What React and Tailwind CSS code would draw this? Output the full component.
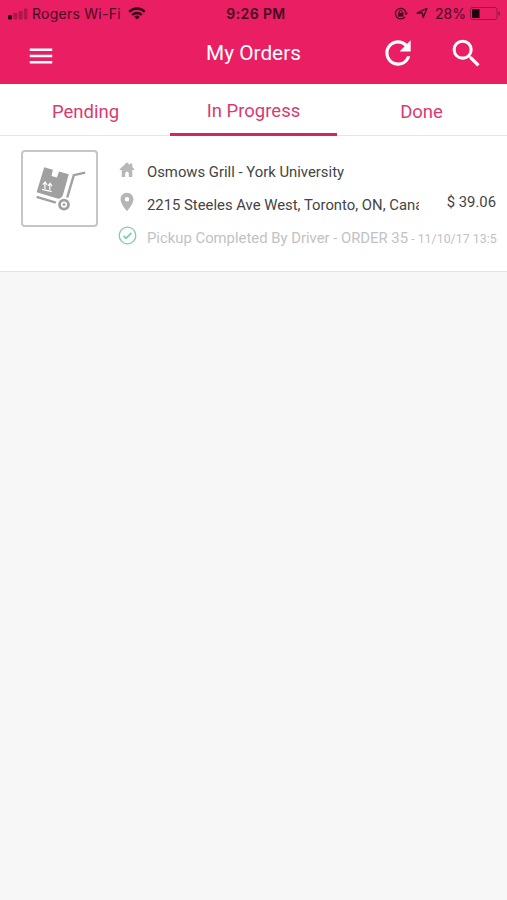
import { MdMenu, MdRefresh, MdSearch, MdPlace } from 'react-icons/md';

const tabs = ['Pending', 'In Progress', 'Done'];

const order = {
  store: 'Osmows Grill - York University',
  address: '2215 Steeles Ave West, Toronto, ON, Cana',
  status: 'Pickup Completed By Driver - ORDER 35',
  date: ' - 11/10/17 13:5',
  price: '$ 39.06',
};

function StatusBar() {
  return (
    <div className="grid h-[27px] grid-cols-3 items-center pl-2 pr-[6px] text-[#450a22] font-[Inter,sans-serif] text-[14px]">
      <div className="flex items-center whitespace-nowrap">
        <svg className="w-5 h-3 shrink-0" viewBox="0 0 20 12" fill="currentColor">
          <rect x="0" y="7" width="4" height="4.5" rx="1" fill="#260412" />
          <rect x="5.3" y="5" width="4" height="6.5" rx="1" opacity=".35" />
          <rect x="10.6" y="3" width="4" height="8.5" rx="1" opacity=".35" />
          <rect x="15.9" y="0.5" width="3.5" height="11" rx="1" opacity=".35" />
        </svg>
        <span className="ml-[4px] tracking-[0.25px]">Rogers Wi-Fi</span>
        <svg className="ml-[7px] -mt-[1px] w-[18px] h-[13px] shrink-0" viewBox="0 0 18 13" fill="none" stroke="#35061a" strokeWidth="2.4">
          <path d="M1.2 4.8a11 11 0 0 1 15.6 0" />
          <path d="M4.2 8a6.8 6.8 0 0 1 9.6 0" />
          <path d="M9 12.6 6.3 9.9a3.8 3.8 0 0 1 5.4 0z" fill="#35061a" stroke="none" />
        </svg>
      </div>
      <div className="pl-[3px] text-center font-semibold tracking-[0.4px]">9:26 PM</div>
      <div className="flex items-center justify-end">
        <svg className="-mt-[1px] w-[14px] h-[13px]" viewBox="0 0 14 13" fill="none" stroke="currentColor" strokeWidth="1.3">
          <path d="M11 9.8A5.3 5.3 0 1 1 11.8 5" />
          <path d="M10 5.4h4l-2 2.8z" fill="currentColor" stroke="none" />
          <rect x="4" y="5.8" width="5.4" height="3.8" fill="currentColor" stroke="none" />
          <path d="M5.2 6V4.8a1.5 1.5 0 0 1 3 0V6" strokeWidth="1" />
        </svg>
        <svg className="ml-[8px] -mt-[1px] w-[12px] h-[12px]" viewBox="0 0 12 12" fill="none" stroke="currentColor" strokeWidth="1.3" strokeLinejoin="round">
          <path d="M1 6 11 1.4 7.2 10.6 6.4 5.8z" />
        </svg>
        <span className="ml-[7px]">28%</span>
        <svg className="ml-[4px] -mt-[1px] w-[31px] h-[13px]" viewBox="0 0 31 13" fill="none">
          <rect x="0.5" y="0.5" width="26.5" height="12" rx="2" stroke="#9c1446" />
          <rect x="2" y="2" width="7.5" height="9" rx="0.5" fill="#1c030d" />
          <path d="M28.5 4.2c2 .8 2 3.8 0 4.6z" fill="#8f123f" />
        </svg>
      </div>
    </div>
  );
}

function CartIcon() {
  return (
    <svg className="w-[52px] h-[48px]" viewBox="0 0 52 48" fill="#a0a0a0">
      <path d="M10.2 2.2 18.9 4.7 17.5 10.9 22.9 12.4 25 6.5 34.8 9.3 29 29.8C27.8 32.6 26.2 34.2 23.4 33.6L2.6 27.3z" />
      <g stroke="#fff" strokeWidth="1.2" fill="none">
        <path d="M10.9 24V17.4M8.8 19.6 11.2 17 13 20" />
        <path d="M15.8 25.2V18.6M13.9 20.8 16.2 18.2 18 21.2" />
        <path d="M8 24.4 17.8 26.6" />
      </g>
      <path d="M2.6 31.8 21.8 37.6" fill="none" stroke="#a0a0a0" strokeWidth="2.4" />
      <path d="M33.2 32.5 39.8 10.2 51.2 7.6" fill="none" stroke="#a0a0a0" strokeWidth="2.4" />
      <circle cx="30" cy="39.6" r="4.5" fill="none" stroke="#a0a0a0" strokeWidth="2.8" />
      <circle cx="30" cy="39.6" r="1.4" />
    </svg>
  );
}

function HomeIcon() {
  return (
    <svg className="ml-[1px] mt-[2px] h-[15px] w-[16px] shrink-0" viewBox="0 0 16 15" fill="#b8b8b8">
      <path d="M8 .2 11 3V1.4h2.3v3.7L15.4 7.2v.8H13.3V15H9.8V11.4c0-2.3-3.6-2.3-3.6 0V15H2.7V8H.6v-.8z" />
    </svg>
  );
}

function OrderCard() {
  return (
    <div className="flex h-[136px] border-b border-[#e4e4e4] bg-white pl-[21px] pt-[14px]">
      <div className="flex h-[77px] w-[77px] shrink-0 items-center justify-center rounded-[4px] border-2 border-[#c6c6c6]">
        <CartIcon />
      </div>
      <div className="ml-[20px] min-w-0 flex-1 pt-[10px] text-[14.85px] text-[#444]">
        <div className="flex">
          <div className="w-[301px]">
            <div className="flex h-[33px] items-start">
              <HomeIcon />
              <span className="ml-[12px] mt-[2px] whitespace-nowrap leading-5">{order.store}</span>
            </div>
            <div className="flex h-[33px] items-start">
              <MdPlace className="-ml-[2px] -mt-[2px] h-[22px] w-[22px] shrink-0 text-[#b5b5b5]" />
              <span className="ml-[9px] mt-[2px] w-[272px] overflow-hidden whitespace-nowrap leading-5">{order.address}</span>
            </div>
          </div>
          <span className="ml-auto mr-[11px] mt-[32px] whitespace-nowrap leading-5">{order.price}</span>
        </div>
        <div className="flex items-start">
          <svg className="h-[19px] w-[19px] shrink-0" viewBox="0 0 19 19" fill="none" stroke="#77cfad">
            <circle cx="9.5" cy="9.5" r="8.3" strokeWidth="1.3" />
            <path d="m5.5 9.9 2.5 2.4 5.4-5.5" strokeWidth="1.7" />
          </svg>
          <span className="ml-[10px] mt-[2px] whitespace-pre leading-5 text-[#c2c2c2]">
            {order.status}
            <span className="text-[12.4px]">{order.date}</span>
          </span>
        </div>
      </div>
    </div>
  );
}

export default function App() {
  return (
    <div className="h-[900px] w-[507px] overflow-hidden bg-[#f7f7f7] font-[Roboto,sans-serif]">
      <header className="h-[84px] bg-[#e91e63]">
        <StatusBar />
        <div className="grid h-[52px] grid-cols-3 items-center text-white">
          <MdMenu className="ml-[26px] mt-[5px] h-[30px] w-[30px]" />
          <h1 className="pt-[2px] text-center text-[20.8px]">My Orders</h1>
          <div className="flex items-center justify-end">
            <MdRefresh className="h-[38px] w-[38px]" />
            <MdSearch className="ml-[31px] mr-[22px] h-[37px] w-[37px]" />
          </div>
        </div>
      </header>

      <nav className="grid h-[52px] grid-cols-3 border-b border-[#e6e6e6] bg-white text-[18.5px] text-[#d93a70]">
        {tabs.map((tab) => (
          <button
            key={tab}
            className={
              tab === 'In Progress'
                ? 'mx-px h-[52px] border-b-[3px] border-[#d42560] pt-[6px]'
                : 'h-[52px] pt-[5px] first:pl-[2px] last:pr-[2px]'
            }
          >
            {tab}
          </button>
        ))}
      </nav>

      <OrderCard />
    </div>
  );
}
